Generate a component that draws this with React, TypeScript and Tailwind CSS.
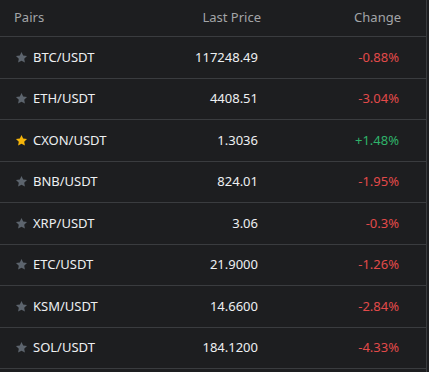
const rows = [
  { pair: 'BTC/USDT', price: '117248.49', change: '-0.88%', fav: false },
  { pair: 'ETH/USDT', price: '4408.51', change: '-3.04%', fav: false },
  { pair: 'CXON/USDT', price: '1.3036', change: '+1.48%', fav: true },
  { pair: 'BNB/USDT', price: '824.01', change: '-1.95%', fav: false },
  { pair: 'XRP/USDT', price: '3.06', change: '-0.3%', fav: false },
  { pair: 'ETC/USDT', price: '21.9000', change: '-1.26%', fav: false },
  { pair: 'KSM/USDT', price: '14.6600', change: '-2.84%', fav: false },
  { pair: 'SOL/USDT', price: '184.1200', change: '-4.33%', fav: false },
]

function Star({ active }: { active: boolean }) {
  return (
    <svg viewBox="0 0 24 24" className="w-[13px] h-[13px]">
      <path
        d="M12 1.8l3.1 6.6 7.1.9-5.2 4.9 1.3 7.1L12 17.9l-6.3 3.4 1.3-7.1-5.2-4.9 7.1-.9z"
        fill={active ? '#f5b50a' : '#5c646d'}
      />
    </svg>
  )
}

export default function App() {
  return (
    <div className="w-[429px] h-[372px] bg-[#1d1e20] overflow-hidden font-['Noto_Sans',sans-serif] text-[13px]">
      <div className="w-[427px] h-full border-r border-[#3a3c3f]">
        <div className="flex items-center h-[37px] border-b border-[#3a3c3f] text-[#a3a5a8]">
          <div className="w-[160px] pl-[14px]">Pairs</div>
          <div className="w-[101px] text-right">Last Price</div>
          <div className="w-[140px] text-right">Change</div>
        </div>
        {rows.map((r) => (
          <div key={r.pair} className="flex items-center h-[41.5px] border-b border-[#3a3c3f]">
            <div className="w-[160px] pl-[15px] flex items-center gap-[5px] text-[#eef0f2]">
              <Star active={r.fav} />
              <span>{r.pair}</span>
            </div>
            <div className="w-[98px] text-right text-[#eef0f2]">{r.price}</div>
            <div
              className={`w-[141px] text-right ${r.change.startsWith('+') ? 'text-[#2fb36a]' : 'text-[#e24a4a]'}`}
            >
              {r.change}
            </div>
          </div>
        ))}
      </div>
    </div>
  )
}
